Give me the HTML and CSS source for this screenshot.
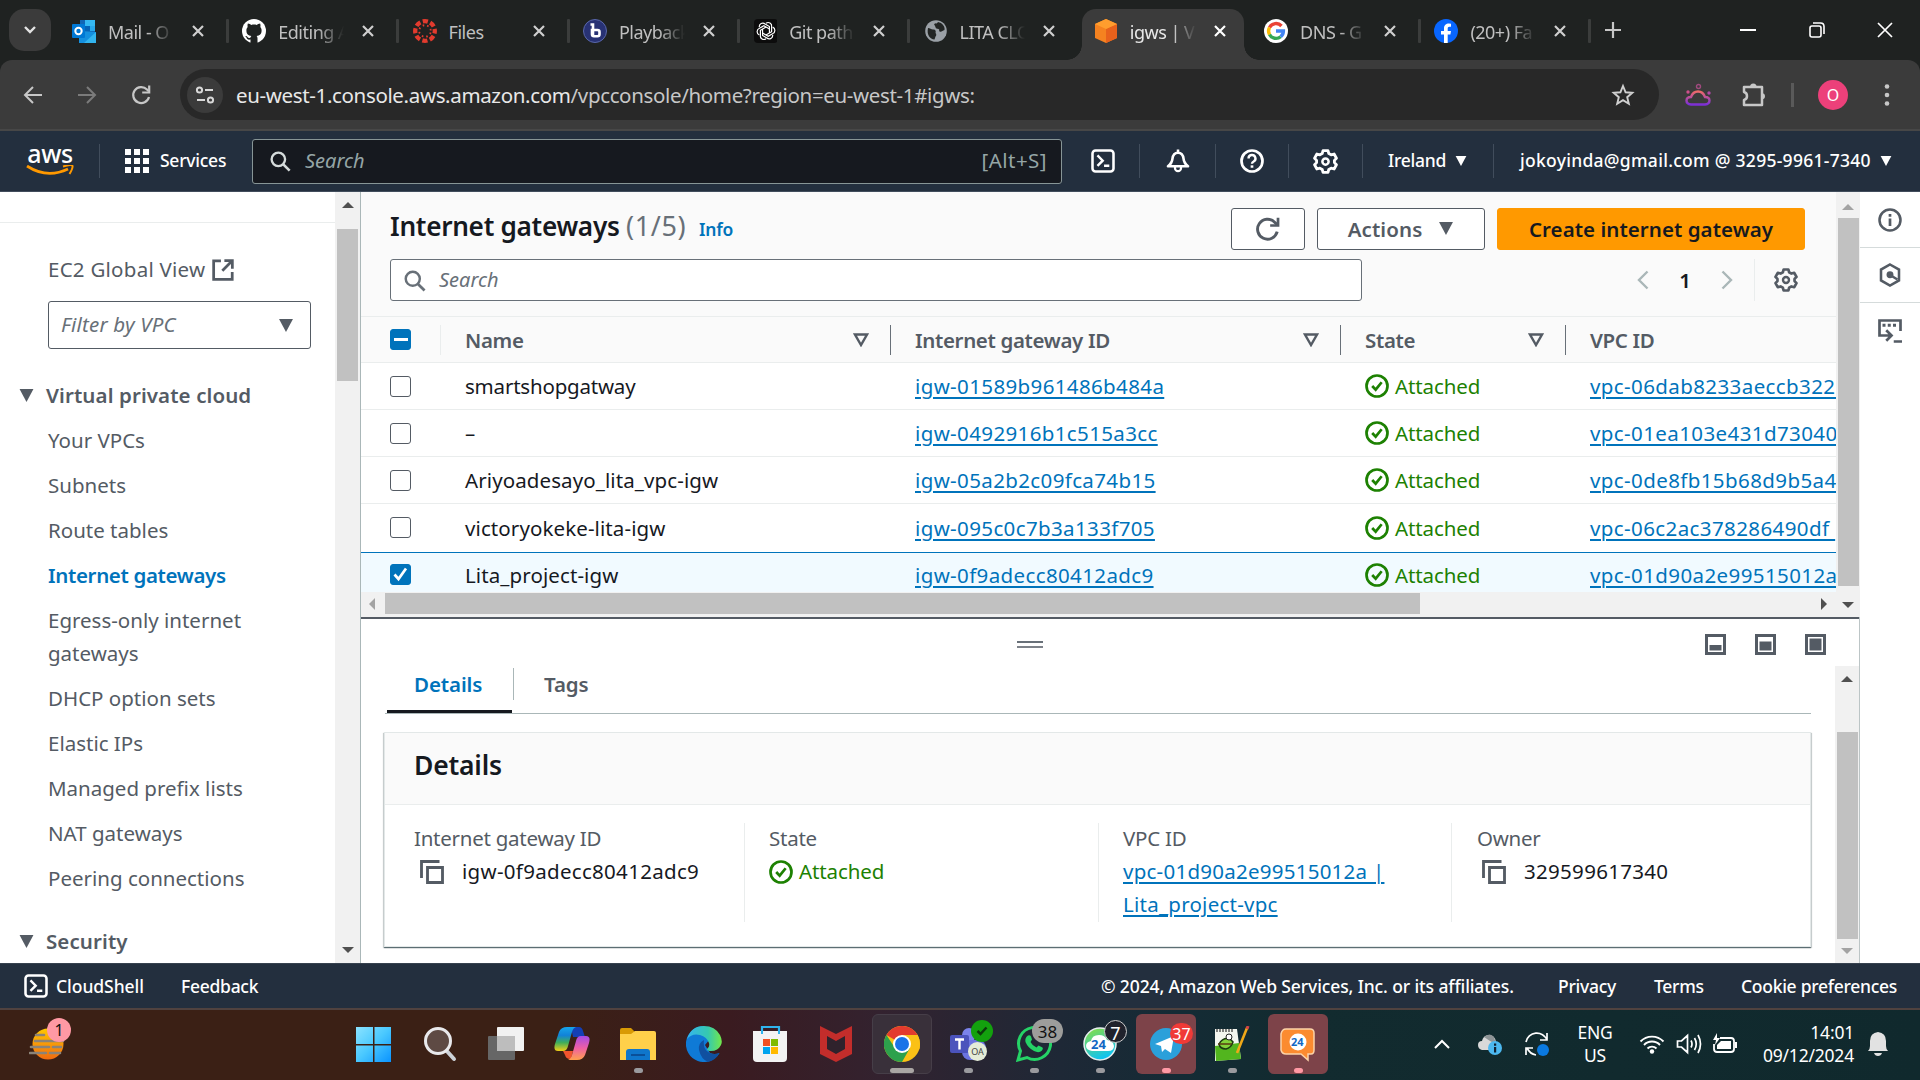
FILE: index.html
```html
<!DOCTYPE html>
<html lang="en">
<head>
<meta charset="utf-8">
<title>igws | VPC Console</title>
<link rel="stylesheet" href="styles.css">
</head>
<body>
<svg class="defs" aria-hidden="true">
  <symbol id="x" viewBox="0 0 24 24"><path d="M7 7l10 10M17 7L7 17" stroke="currentColor" stroke-width="2.2" fill="none"/></symbol>
  <symbol id="search" viewBox="0 0 16 16"><circle cx="6.8" cy="6.8" r="4.9" fill="none" stroke="currentColor" stroke-width="1.7"/><path d="M10.4 10.4L15 15" stroke="currentColor" stroke-width="1.9"/></symbol>
  <symbol id="down" viewBox="0 0 16 14"><path d="M.5 0h15L8 14z" fill="currentColor"/></symbol>
  <symbol id="filter" viewBox="0 0 16 14"><path d="M2 1.5h12L8 12z" fill="none" stroke="currentColor" stroke-width="2.4"/></symbol>
  <symbol id="gear" viewBox="0 0 16 16"><path d="M6.4 1h3.2l.5 1.9 1.5.8 1.9-.5L15 5.900l-1.300 1.400v1.400L15 10.100l-1.500 2.700-1.900-.5-1.500.8L9.600 15H6.400l-.5-1.900-1.500-.8-1.900.5L1 10.100l1.300-1.400V7.300L1 5.900l1.500-2.700 1.900.5 1.500-.8z" fill="none" stroke="currentColor" stroke-width="1.8" stroke-linejoin="round"/><circle cx="8" cy="8" r="2" fill="none" stroke="currentColor" stroke-width="1.600"/></symbol>
  <symbol id="ok" viewBox="0 0 16 16"><circle cx="8" cy="8" r="7" fill="none" stroke="currentColor" stroke-width="1.800"/><path d="M4.800 8l2.300 2.400 4-4.900" fill="none" stroke="currentColor" stroke-width="1.800"/></symbol>
  <symbol id="shell" viewBox="0 0 16 16"><rect x="1" y="1" width="14" height="14" rx="2" fill="none" stroke="currentColor" stroke-width="1.700"/><path d="M4.300 4.300L7.800 7.800l-3.500 3.500M8.700 11.200h3.500" fill="none" stroke="currentColor" stroke-width="1.600"/></symbol>
  <symbol id="copy" viewBox="0 0 16 16"><path d="M1 12V1h12M5 5h10v10H5z" fill="none" stroke="currentColor" stroke-width="1.900"/></symbol>
  <symbol id="refresh" viewBox="0 0 24 24"><path d="M20.500 14.500a9.200 9.200 0 1 1-2.400-8.800L20.500 8" fill="none" stroke="currentColor" stroke-width="2.700"/><path d="M22.500 1.500v8.500H14V7.500h6v-6z" fill="currentColor"/></symbol>
</svg>

<div class="tabstrip">
  <button class="tab-search"><svg width="14" height="10" viewBox="0 0 14 10"><path d="M2 2l5 5 5-5" fill="none" stroke="#e3e3e3" stroke-width="2.400"/></svg></button>
  <div class="tabs">
    <div class="tab"><svg class="fav" viewBox="0 0 24 24"><path d="M8 1h15v12H8z" fill="#1066b5"/><path d="M13 1h10v6H13z" fill="#35b8f1"/><path d="M13 7h5v5h-5z" fill="#0364b8"/><path d="M18 7h5v5h-5z" fill="#28a8ea"/><path d="M7 12l17 1v11H7z" fill="#1490df"/><path d="M24 13L12 24h12z" fill="#50d9ff" opacity=".5"/><rect y="5" width="13" height="14" rx="1" fill="#0078d4"/><circle cx="6.500" cy="12" r="3.200" fill="none" stroke="#fff" stroke-width="2"/></svg><span class="tt">Mail - O</span><svg class="cl"><use href="#x"/></svg></div>
    <div class="tab"><svg class="fav" viewBox="0 0 24 24"><circle cx="12" cy="12" r="12" fill="#fff"/><path d="M8.500 24v-3.500c-2.500.6-3.500-.5-4.200-2.200-.4-.8-1.300-1 -.6-1.300 1.600-.2 2 2 3.400 2.100 .8 0 1.400-.2 1.600-1 .1-.5.400-.9.700-1.200-3-.4-5-1.600-5-5.400 0-1.500.5-2.600 1.300-3.400-.3-.9-.3-2.300.2-3.600 1.400 0 2.600.8 3.400 1.400 1.700-.4 3.700-.4 5.400 0 .8-.6 2-1.400 3.400-1.400.5 1.300.5 2.700.2 3.600.8.800 1.300 1.900 1.300 3.400 0 3.800-2 5-5 5.400.6.500.9 1.300.9 2.400V24z" fill="#1f2221"/></svg><span class="tt">Editing A</span><svg class="cl"><use href="#x"/></svg></div>
    <div class="tab"><svg class="fav" viewBox="0 0 24 24"><circle cx="12" cy="12" r="9.800" fill="none" stroke="#e23b2e" stroke-width="4.300" stroke-dasharray="5.200 2.500" stroke-dashoffset="2.600"/><circle cx="12" cy="12" r="5.800" fill="none" stroke="#e23b2e" stroke-width="1.800" stroke-dasharray="1.600 2.950" stroke-dashoffset="-1.500"/></svg><span class="tt">Files</span><svg class="cl"><use href="#x"/></svg></div>
    <div class="tab"><svg class="fav" viewBox="0 0 24 24"><circle cx="12" cy="12" r="11.500" fill="#283274" stroke="#5a68aa"/><path d="M7.500 5.500h2.500V17M9 11h5.500q2 0 2 2v2.200q0 2-2 2H11q-2 0-2-2z" fill="none" stroke="#fff" stroke-width="2.600"/></svg><span class="tt">Playback</span><svg class="cl"><use href="#x"/></svg></div>
    <div class="tab"><svg class="fav" viewBox="-1 0 24 24"><rect width="24" height="24" rx="4" fill="#0c0c0c"/><g fill="none" stroke="#fff" stroke-width="1.200"><path id="oa" d="M12 4.300a3.500 3.500 0 0 1 5.600 3.400v5L12 16"/><use href="#oa" transform="rotate(60 12 12)"/><use href="#oa" transform="rotate(120 12 12)"/><use href="#oa" transform="rotate(180 12 12)"/><use href="#oa" transform="rotate(240 12 12)"/><use href="#oa" transform="rotate(300 12 12)"/></g></svg><span class="tt">Git path</span><svg class="cl"><use href="#x"/></svg></div>
    <div class="tab"><svg class="fav" viewBox="0 0 24 24"><g transform="translate(2)"><circle cx="11" cy="12" r="10.800" fill="#9aa0a6"/><path d="M3 9c2 0 3 1.500 5 1.500 3 0 3 2 2.500 3.500 1 1 1 2.500 0 3.500l-1 3C5 20 1.500 16 3 9zM9 5c2-1 3 0 4-2l3 1c3 2 4 5 3.500 7-2 .5-3 2.500-5 1.500-1-1 .5-2-1-2.500s-3-.5-3-2z" fill="#222524"/></g></svg><span class="tt">LITA CLO</span><svg class="cl"><use href="#x"/></svg></div>
    <div class="tab active"><svg class="fav" viewBox="0 0 24 24"><path d="M12 0l11 5v14l-11 5L1 19V5z" fill="#f58220"/><path d="M12 10l11-5v14l-11 5z" fill="#e8611c"/><path d="M12 0l11 5-11 5L1 5z" fill="#ff9d2e"/></svg><span class="tt">igws | VP</span><svg class="cl"><use href="#x"/></svg></div>
    <div class="tab"><svg class="fav" viewBox="0 0 24 24"><circle cx="12" cy="12" r="12" fill="#fff"/><g fill="none" stroke-width="3.400"><path d="M17.500 7A7.400 7.400 0 0 0 5.500 8.500" stroke="#ea4335"/><path d="M5.500 8.500a7.400 7.400 0 0 0 0 7" stroke="#fbbc05"/><path d="M5.500 15.500a7.400 7.400 0 0 0 11.200 2.200" stroke="#34a853"/><path d="M16.700 17.700A7.400 7.400 0 0 0 19.400 12H12" stroke="#4285f4"/></g></svg><span class="tt">DNS - G</span><svg class="cl"><use href="#x"/></svg></div>
    <div class="tab"><svg class="fav" viewBox="0 0 24 24"><circle cx="12" cy="12" r="12" fill="#0866ff"/><path d="M10 24v-8.500H7V12h3V9.500C10 6 12 4.500 15 4.500l2 .2v3h-1.500c-1.400 0-1.800.7-1.800 1.800V12H17l-.6 3.500h-2.700V24z" fill="#fff"/></svg><span class="tt">(20+) Fa</span><svg class="cl"><use href="#x"/></svg></div>
  </div>
  <svg class="newtab" width="18" height="18" viewBox="0 0 18 18"><path d="M9 1v16M1 9h16" stroke="#c7c7c7" stroke-width="2.200"/></svg>
  <div class="winctl">
    <svg width="18" height="18" viewBox="0 0 18 18"><path d="M1 9h16" stroke="#fff" stroke-width="2"/></svg>
    <svg width="18" height="18" viewBox="0 0 18 18"><rect x="2" y="5" width="11" height="11" rx="2" fill="none" stroke="#fff" stroke-width="1.600"/><path d="M5 2h7.500Q16 2 16 5.500V13" fill="none" stroke="#fff" stroke-width="1.600"/></svg>
    <svg width="18" height="18" viewBox="0 0 18 18"><path d="M2 2l14 14M16 2L2 16" stroke="#fff" stroke-width="1.700"/></svg>
  </div>
</div>

<div class="toolbar">
  <div class="nav">
    <svg width="20" height="20" viewBox="0 0 20 20"><path d="M19 10H2M10 2l-8 8 8 8" fill="none" stroke="#c7c7c7" stroke-width="2"/></svg>
    <svg width="20" height="20" viewBox="0 0 20 20"><path d="M1 10h17M10 2l8 8-8 8" fill="none" stroke="#7b7b7b" stroke-width="2"/></svg>
    <svg width="22" height="22" viewBox="0 0 22 22"><path d="M19 13a8 8 0 1 1-2-7.500L18.500 7" fill="none" stroke="#c7c7c7" stroke-width="2.200"/><path d="M19.200 1.500v7h-7" fill="none" stroke="#c7c7c7" stroke-width="2.200"/></svg>
  </div>
  <div class="omni">
    <span class="tune"><svg width="20" height="20" viewBox="0 0 20 20"><g fill="none" stroke="#d8d8d8" stroke-width="2"><circle cx="4.500" cy="5" r="2.600"/><path d="M10 5h8M2 15h8"/><circle cx="15.500" cy="15" r="2.600"/></g></svg></span>
    <span class="url">eu-west-1.console.aws.amazon.com<i>/vpcconsole/home?region=eu-west-1#igws:</i></span>
    <svg width="24" height="24" viewBox="0 0 24 24"><path d="M12 3l2.600 6.300 6.700.5-5.100 4.400 1.600 6.600L12 17.200l-5.800 3.600 1.600-6.600-5.100-4.400 6.700-.5z" fill="none" stroke="#d0d0d0" stroke-width="1.900"/></svg>
  </div>
  <div class="ext">
    <svg width="26" height="24" viewBox="0 0 26 24"><defs><linearGradient id="cg" x2="0" y2="1"><stop stop-color="#ee6a6a"/><stop offset="1" stop-color="#7c2fd6"/></linearGradient></defs><path d="M6 21.500q-4.500-.5-4.500-4 .2-3.500 4.500-3.500 2-5.500 7-5.500t7 5.500q4.300 0 4.500 3.500 0 3.500-4.500 4z" fill="none" stroke="url(#cg)" stroke-width="2.400"/><circle cx="13.500" cy="3.500" r="2" fill="none" stroke="#a04a7e" stroke-width="1.400"/><circle cx="3" cy="9" r="1.700" fill="#cf4f8c"/><circle cx="24" cy="10" r="1.700" fill="#b148a8"/></svg>
    <svg class="puzzle" width="26" height="26" viewBox="0 0 26 26"><path d="M3 5h18v18H3v-5c4-1 4-7 0-8z" fill="none" stroke="#c7c7c7" stroke-width="2.500" stroke-linejoin="round"/><path d="M9 5a3.300 3.600 0 0 1 6.600 0zM21 11a3.600 3.300 0 0 1 0 6.500z" fill="#c7c7c7"/></svg>
    <span class="bar"></span>
    <span class="avatar">O</span>
    <svg class="dots" width="6" height="24" viewBox="0 0 6 24"><g fill="#c7c7c7"><circle cx="3" cy="3.500" r="2.300"/><circle cx="3" cy="12" r="2.300"/><circle cx="3" cy="20.500" r="2.300"/></g></svg>
  </div>
</div>

<header class="aws">
  <div class="logo"><span>aws</span><svg width="48" height="11" viewBox="0 0 48 11"><path d="M1 1q20 13 41 3" fill="none" stroke="#f90" stroke-width="2.800"/><path d="M37 1.500q9-2.500 9.500-.5t-3 8" fill="none" stroke="#f90" stroke-width="2"/></svg></div>
  <span class="vsep s1"></span>
  <div class="services"><svg width="24" height="24" viewBox="0 0 24 24" fill="#fff"><path d="M0 0h6v6H0zM9 0h6v6H9zM18 0h6v6h-6zM0 9h6v6H0zM9 9h6v6H9zM18 9h6v6h-6zM0 18h6v6H0zM9 18h6v6H9zM18 18h6v6h-6z"/></svg><span class="t18">Services</span></div>
  <div class="gsearch"><svg width="22" height="22"><use href="#search"/></svg><em>Search</em><span>[Alt+S]</span></div>
  <div class="hicons">
    <span class="hi hs"><svg width="24" height="24"><use href="#shell"/></svg></span>
    <span class="hi hb"><svg width="24" height="24" viewBox="0 0 16 16"><path d="M1.300 11.500Q4 9.500 4.300 6.500 4.800 2.500 8 2.500t3.700 4q.3 3 3 5zM8 .3v2" fill="none" stroke="#fff" stroke-width="1.700" stroke-linejoin="round"/><path d="M6 12v.8a2 2 0 0 0 4 0V12" fill="none" stroke="#fff" stroke-width="1.500"/></svg></span>
    <span class="hi hh"><svg width="24" height="24" viewBox="0 0 16 16"><circle cx="8" cy="8" r="7" fill="none" stroke="#fff" stroke-width="1.800"/><path d="M5.700 6.300a2.300 2.300 0 1 1 3.400 2q-1.100.6-1.100 1.600" fill="none" stroke="#fff" stroke-width="1.600"/><path d="M7.100 10.900h1.800v1.600H7.100z" fill="#fff"/></svg></span>
    <span class="hi hg"><svg width="25" height="25"><use href="#gear"/></svg></span>
  </div>
  <div class="region"><span class="t18 reg">Ireland</span><svg width="12" height="10"><use href="#down"/></svg></div>
  <div class="account"><span class="t18 acc">jokoyinda@gmail.com @ 3295-9961-7340</span><svg width="12" height="10"><use href="#down"/></svg></div>
</header>

<main class="main">
  <aside class="side">
    <div class="sidetop"></div>
    <div class="ec2"><span>EC2 Global View</span><svg width="22" height="22" viewBox="0 0 16 16"><path d="M6.500 1.300H1.200v13.500h13.500V9.500M9 1.200h5.800V7M14.500 1.500L7.500 8.500" fill="none" stroke="#545b64" stroke-width="2"/></svg></div>
    <div class="vpcsel"><em>Filter by VPC</em><svg width="16" height="13"><use href="#down"/></svg></div>
    <div class="sec"><svg width="15" height="13"><use href="#down"/></svg><b>Virtual private cloud</b></div>
    <nav class="links">
      <a>Your VPCs</a><a>Subnets</a><a>Route tables</a><a class="cur">Internet gateways</a><a>Egress-only internet gateways</a><a>DHCP option sets</a><a>Elastic IPs</a><a>Managed prefix lists</a><a>NAT gateways</a><a>Peering connections</a>
    </nav>
    <div class="sec sec2"><svg width="15" height="13"><use href="#down"/></svg><b>Security</b></div>
  </aside>
  <div class="vscroll sb1"><i class="up"></i><i class="thumb"></i><i class="dn"></i></div>

  <section class="content">
    <div class="upper">
      <div class="list">
        <div class="lhead">
          <h1>Internet gateways <span>(1/5)</span></h1><a class="info">Info</a>
          <div class="btns">
            <button class="btn ref"><svg width="26" height="26"><use href="#refresh"/></svg></button>
            <button class="btn act"><span>Actions</span><svg width="16" height="13"><use href="#down"/></svg></button>
            <button class="btn pri"><span>Create internet gateway</span></button>
          </div>
        </div>
        <div class="lfilter">
          <div class="fsearch"><svg width="23" height="23"><use href="#search"/></svg><em>Search</em></div>
          <div class="pager"><svg width="12" height="20" viewBox="0 0 12 20"><path d="M10.500 1.500L2 10l8.500 8.500" fill="none" stroke="#aab7b8" stroke-width="2.400"/></svg><b>1</b><svg width="12" height="20" viewBox="0 0 12 20"><path d="M1.500 1.500L10 10l-8.500 8.500" fill="none" stroke="#aab7b8" stroke-width="2.400"/></svg></div>
          <div class="pref"><svg width="24" height="24"><use href="#gear"/></svg></div>
        </div>
        <div class="row th"><span class="ck"><i class="box some"></i></span><span class="c1">Name<svg width="16" height="14"><use href="#filter"/></svg></span><span class="c2">Internet gateway ID<svg width="16" height="14"><use href="#filter"/></svg></span><span class="c3">State<svg width="16" height="14"><use href="#filter"/></svg></span><span class="c4">VPC ID</span></div>
        <div class="row"><span class="ck"><i class="box"></i></span><span class="c1 tight">smartshopgatway</span><span class="c2"><a>igw-01589b961486b484a</a></span><span class="c3 st"><svg width="24" height="24"><use href="#ok"/></svg>Attached</span><span class="c4"><a>vpc-06dab8233aeccb322&nbsp;</a></span></div>
        <div class="row"><span class="ck"><i class="box"></i></span><span class="c1">–</span><span class="c2"><a>igw-0492916b1c515a3cc</a></span><span class="c3 st"><svg width="24" height="24"><use href="#ok"/></svg>Attached</span><span class="c4"><a>vpc-01ea103e431d73040</a></span></div>
        <div class="row"><span class="ck"><i class="box"></i></span><span class="c1">Ariyoadesayo_lita_vpc-igw</span><span class="c2"><a>igw-05a2b2c09fca74b15</a></span><span class="c3 st"><svg width="24" height="24"><use href="#ok"/></svg>Attached</span><span class="c4"><a>vpc-0de8fb15b68d9b5a4&nbsp;</a></span></div>
        <div class="row r4"><span class="ck"><i class="box"></i></span><span class="c1">victoryokeke-lita-igw</span><span class="c2"><a>igw-095c0c7b3a133f705</a></span><span class="c3 st"><svg width="24" height="24"><use href="#ok"/></svg>Attached</span><span class="c4"><a>vpc-06c2ac378286490df&nbsp;</a></span></div>
        <div class="row sel"><span class="ck"><i class="box on"><svg width="17" height="17" viewBox="0 0 17 17"><path d="M2.500 8.500l4 4.500 7.500-10.500" fill="none" stroke="#fff" stroke-width="2.700"/></svg></i></span><span class="c1">Lita_project-igw</span><span class="c2"><a>igw-0f9adecc80412adc9</a></span><span class="c3 st"><svg width="24" height="24"><use href="#ok"/></svg>Attached</span><span class="c4"><a>vpc-01d90a2e99515012a</a></span></div>
        <div class="hscroll"><i class="lf"></i><i class="hthumb"></i><i class="rt"></i></div>
      </div>
      <div class="vscroll sb2"><i class="up dim"></i><i class="thumb"></i><i class="dn"></i></div>
    </div>
    <div class="split">
      <div class="grip"><span></span><i class="handle"></i><div class="sizes">
        <svg width="21" height="21" viewBox="0 0 21 21"><path d="M1.500 1.500h18v18h-18z" fill="none" stroke="#545b64" stroke-width="3"/><path d="M4.500 11h12v5.500h-12z" fill="#545b64"/></svg>
        <svg width="21" height="21" viewBox="0 0 21 21"><path d="M1.500 1.500h18v18h-18z" fill="none" stroke="#545b64" stroke-width="3"/><path d="M4.500 7.500h12v9h-12z" fill="#545b64"/></svg>
        <svg width="21" height="21" viewBox="0 0 21 21"><path d="M1.500 1.500h18v18h-18z" fill="none" stroke="#545b64" stroke-width="3"/><path d="M4.500 4.500h12v12h-12z" fill="#545b64"/></svg>
      </div></div>
      <div class="sbody">
        <div class="sinner">
          <div class="stabs"><b class="on">Details</b><b>Tags</b></div>
          <div class="card">
            <h2>Details</h2>
            <div class="cols">
              <div><label>Internet gateway ID</label><p class="cp"><svg width="24" height="24"><use href="#copy"/></svg>igw-0f9adecc80412adc9</p></div>
              <div><label>State</label><p class="st"><svg width="24" height="24"><use href="#ok"/></svg>Attached</p></div>
              <div><label>VPC ID</label><p><a>vpc-01d90a2e99515012a | <br>Lita_project-vpc</a></p></div>
              <div><label>Owner</label><p class="cp"><svg width="24" height="24"><use href="#copy"/></svg>329599617340</p></div>
            </div>
          </div>
        </div>
        <div class="vscroll sb3"><i class="up"></i><i class="thumb"></i><i class="dn dim"></i></div>
      </div>
    </div>
  </section>
  <aside class="rail">
    <div><svg width="24" height="24" viewBox="0 0 16 16"><circle cx="8" cy="8" r="7" fill="none" stroke="#545b64" stroke-width="1.700"/><path d="M7.100 7h1.800v5H7.100zM7.100 4h1.800v1.800H7.100z" fill="#545b64"/></svg></div>
    <div><svg width="24" height="24" viewBox="0 0 16 16"><path d="M8 1l6 3.400v7.200L8 15l-6-3.400V4.400z" fill="none" stroke="#545b64" stroke-width="1.700"/><circle cx="8" cy="7.800" r="2.300" fill="#545b64"/><path d="M8 8l5 3" stroke="#545b64" stroke-width="1.700"/></svg></div>
    <div><svg width="24" height="24" viewBox="0 0 16 16"><path d="M15 8V1H1v10h7M5.500 7.500L9 11l-3.500 3.500M10.500 15H16" fill="none" stroke="#545b64" stroke-width="1.800"/><path d="M3 3.200h2v2H3zM6.500 3.200h2v2h-2zM10 3.200h2v2h-2z" fill="#545b64"/></svg></div>
  </aside>
</main>

<footer class="foot">
  <svg width="24" height="24"><use href="#shell"/></svg><span class="f1">CloudShell</span><span class="f2">Feedback</span>
  <span class="f3">© 2024, Amazon Web Services, Inc. or its affiliates.</span><span class="f4">Privacy</span><span class="f5">Terms</span><span class="f6">Cookie preferences</span>
</footer>

<div class="taskbar">
  <div class="weather"><svg width="38" height="34" viewBox="0 0 38 34"><defs><linearGradient id="sg" x2="0" y2="1"><stop stop-color="#ffc800"/><stop offset="1" stop-color="#f06a10"/></linearGradient></defs><circle cx="19" cy="17" r="15.500" fill="url(#sg)"/><path d="M7 8h8M6 14h28M2 20h18M24 20h8M1 26h16M21 26h10" stroke="#8b8378" stroke-width="2.600" stroke-linecap="round"/></svg><i>1</i></div>
  <div class="apps">
    <div><svg viewBox="0 0 36 36"><defs><linearGradient id="wg" x2="1" y2="1"><stop stop-color="#8be3ff"/><stop offset=".5" stop-color="#49c8ff"/><stop offset="1" stop-color="#0a93ff"/></linearGradient></defs><path d="M0 1h17v17H0zM18.500 1H35v17H18.500zM0 19.500h17V36H0zM18.500 19.500H35V36H18.500z" fill="url(#wg)"/></svg></div>
    <div><svg viewBox="0 0 36 36"><path d="M23 23l9 10" stroke="#cdd2d8" stroke-width="4" stroke-linecap="round"/><circle cx="16" cy="15" r="12.500" fill="#5e4a44" stroke="#e9e9ec" stroke-width="3"/></svg></div>
    <div><svg viewBox="0 0 36 36"><rect y="10" width="27" height="24" rx="1" fill="#666"/><rect x="9" y="1" width="27" height="24" rx="1" fill="#f1f1f1"/><path d="M9 10h18v15H9z" fill="#bdbdbd"/></svg></div>
    <div><svg viewBox="0 0 36 36"><defs><linearGradient id="c1" x2="0" y2="1"><stop stop-color="#16a5ec"/><stop offset=".35" stop-color="#1182d8"/><stop offset=".65" stop-color="#3fae5a"/><stop offset="1" stop-color="#f3cf17"/></linearGradient><linearGradient id="c2" x2="0" y2="1"><stop stop-color="#a54be6"/><stop offset=".5" stop-color="#ee5fa5"/><stop offset="1" stop-color="#ffa04d"/></linearGradient></defs><path d="M17 1h8q3 0 4 4l2 6H19z" fill="#143fb5"/><path d="M9 25h10l-2 8h-1q-4 0-5-4z" fill="#f2542d"/><path d="M13 1h9q-3 1-4 5l-4 14q-1 5-5 5H4q-5 0-3-7l4-12q2-5 8-5z" fill="url(#c1)"/><path d="M23 34h-9q3-1 4-5l4-14q1-5 5-5h5q5 0 3 7l-4 12q-2 5-8 5z" fill="url(#c2)"/></svg></div>
    <div class="run"><svg viewBox="0 0 36 36"><path d="M0 4q0-2 2-2h9l4 4v6H0z" fill="#d99a05"/><path d="M0 8h11l4-3h19q2 0 2 2v27H0z" fill="#ffd04a"/><path d="M6 34V26q0-3 3-3h18q3 0 3 3v8z" fill="#0f76cb"/><path d="M11 29h14" stroke="#0a4f98" stroke-width="2"/></svg></div>
    <div><svg viewBox="0 0 36 36"><defs><linearGradient id="e1"><stop stop-color="#35b5ee"/><stop offset=".6" stop-color="#35c8b0"/><stop offset="1" stop-color="#72e84a"/></linearGradient></defs><path d="M18 0a18 18 0 1 0 15.500 27q-5 2-9.500 0l-5-8 5-6z" fill="#0f7ad6"/><path d="M1 13Q5 0 18 0q11 0 16 9 3 6 1 10-3 6-10 6-4 0-4-2 3-2 2-6-2-6-9-8Q6 7 1 13z" fill="url(#e1)"/><path d="M18 14q-6 3-5 10 2 9 9 12 8-2 11.500-9-5 2-9.500 0-5-2-6-7-.5-3 0-6z" fill="#1050a0"/></svg></div>
    <div><svg viewBox="0 0 36 36"><path d="M10 8V1h17v7" fill="none" stroke="#2fb4ee" stroke-width="2.200"/><path d="M1 5h34v27q0 4-4 4H5q-4 0-4-4z" fill="#f3f3f3"/><path d="M10 5v3M27 5v3" stroke="#2fb4ee" stroke-width="2"/><path d="M11 13h7v7h-7z" fill="#f25022"/><path d="M19 13h7v7h-7z" fill="#7fba00"/><path d="M11 21h7v7h-7z" fill="#00a4ef"/><path d="M19 21h7v7h-7z" fill="#ffb900"/></svg></div>
    <div><svg viewBox="0 0 36 36"><path d="M2 0l16 8 16-8v28L18 36 2 28z" fill="#c32d2b"/><path d="M9 10l9 5 9-5v13l-9 5-9-5z" fill="#2f222c"/></svg></div>
    <div class="chrome"><svg viewBox="0 0 36 36"><circle cx="18" cy="18" r="18" fill="#fbc116"/><path d="M18 18L2.400 9A18 18 0 0 1 33.600 9z" fill="#e33b2e"/><path d="M2.400 9A18 18 0 0 0 18 36l8-14H11z" fill="#2da14c"/><path d="M18 9h15.600q2.400 5 2.400 9t-1 6l-9-2z" fill="#fbc116"/><circle cx="18" cy="18" r="9" fill="#fff"/><circle cx="18" cy="18" r="7" fill="#1a73e8"/></svg></div>
    <div class="run"><svg viewBox="0 0 36 36"><circle cx="19" cy="9" r="7" fill="#7b83eb"/><rect x="12" y="14" width="24" height="20" rx="8" fill="#6b74e0"/><rect y="9" width="19" height="18" rx="2" fill="#4b53bc"/><path d="M5 13.500h9M9.500 13.500v10" stroke="#fff" stroke-width="2.400"/></svg><i class="bd oa">OA</i><i class="bd tick"><svg width="12" height="10" viewBox="0 0 12 10"><path d="M1.500 5l3 3 6-6.500" fill="none" stroke="#0c3b0c" stroke-width="2.500"/></svg></i></div>
    <div class="run"><svg viewBox="0 0 36 36"><path d="M2 34l2.500-9A16 16 0 1 1 11 31.500z" fill="none" stroke="#25d366" stroke-width="3"/><path d="M12 9.500q2-1 3 1l1 3-1.500 2.500q2 4 6 5.500l2-2 4 2q1 1-.5 3-3 3-8 .5-6-3-8.500-9-1-4 2.500-6.500z" fill="#25d366"/></svg><i class="bd n38">38</i></div>
    <div class="run"><svg viewBox="0 0 36 36"><defs><linearGradient id="b1" x2=".4" y2="1"><stop stop-color="#8de03b"/><stop offset="1" stop-color="#12c4ee"/></linearGradient></defs><circle cx="18" cy="18" r="16" fill="url(#b1)" stroke="#e7eeee" stroke-width="1.500"/><path d="M10 25q-6-1-6-5t5-5q1-6 8-6 6 0 8 5 6 0 7 6 0 5-6 5z" fill="#fff"/></svg><i class="n24">24</i><i class="bd n7">7</i></div>
    <div class="run hot"><svg viewBox="0 0 36 36"><circle cx="18" cy="18" r="16" fill="#2ba0da"/><path d="M7 18l19-8-3 17-6-4-3 3-1-6z" fill="#fff"/></svg><i class="bd n37">37</i></div>
    <div class="run"><svg viewBox="0 0 36 36"><path d="M1 3h22l4 30-26 2z" fill="#f4f6ef"/><path d="M1 20l24-3 2 16-25 2z" fill="#52b51e"/><path d="M3 3v3M6 3v3M9 3v3M12 3v3M15 3v3M18 3v3" stroke="#333" stroke-width="1.200"/><path d="M5 18q4-7 11-5l3 3q-2 6-7 7-6 0-7-5z" fill="#83d33a" stroke="#1c3a10" stroke-width="1.500"/><path d="M4 18h14" stroke="#5a3a10" stroke-width="1.500"/><circle cx="15" cy="11" r="3" fill="#fff" stroke="#222"/><path d="M33 2L23 27" stroke="#f0a818" stroke-width="2.600"/><path d="M34 0l-1 3" stroke="#d34545" stroke-width="3"/></svg></div>
    <div class="run hot"><svg viewBox="0 0 36 36"><path d="M6 3h24q4 0 4 4v17q0 4-3 4h-3v6l-7-6H6q-4 0-5-4V8q1-5 5-5z" fill="#fb8b30" stroke="#fbd3a8" stroke-width="1.500"/><circle cx="18" cy="16" r="8.500" fill="#fff"/></svg><i class="n24 o24">24</i></div>
  </div>
  <div class="tray">
    <svg width="18" height="12" viewBox="0 0 18 12"><path d="M2 10l7-7 7 7" fill="none" stroke="#fff" stroke-width="2"/></svg>
    <svg class="t2" width="26" height="26" viewBox="0 0 26 26"><path d="M5 19q-4-1-4-5t4-4q1-5 6-6 7 0 8 7l-6 8z" fill="#d9d9d9"/><path d="M7 6q6-5 10 0l2 7-6-3z" fill="#8e9496"/><circle cx="18" cy="17" r="7" fill="#4cb8f0"/><path d="M17 16h2.200v5.500H17zM17 12.500h2.200v2.200H17z" fill="#123"/></svg>
    <svg class="t3" width="26" height="26" viewBox="0 0 26 26"><g fill="none" stroke="#fff" stroke-width="1.700"><path d="M2 11a11 11 0 0 1 21-2M23 2v7h-7M2 24v-7h7M3 17q3 6 9 7"/></g><circle cx="19" cy="19" r="6" fill="#0a79e0"/></svg>
    <div class="lang">ENG<br>US</div>
    <svg class="t4" width="26" height="20" viewBox="0 0 26 20"><g fill="none" stroke="#fff" stroke-width="1.900"><path d="M1.500 7.500a16 16 0 0 1 23 0M5 11a11 11 0 0 1 16 0M8.500 14.500a6.300 6.300 0 0 1 9 0"/></g><circle cx="13" cy="17.500" r="2.200" fill="#fff"/></svg>
    <svg class="t5" width="26" height="22" viewBox="0 0 26 22"><g fill="none" stroke="#fff" stroke-width="1.700"><path d="M1.500 8v6h4l6 5.500v-17L5.500 8zM15 7.500q2 3.500 0 7M18.500 5q3.500 6 0 12M22 2q5 9 0 18"/></g></svg>
    <svg class="t6" width="26" height="22" viewBox="0 0 26 22"><path d="M8 5h11q3 0 3 3v8q0 3-3 3H5q-3 0-3-3v-5" fill="none" stroke="#fff" stroke-width="1.800"/><path d="M9 8h10v8H5v-4zM23 9h2v6h-2zM5 0L1 7h3l-1 5 5-7H5z" fill="#fff"/></svg>
    <div class="clock">14:01<br>09/12/2024</div>
    <svg class="t7" width="20" height="24" viewBox="0 0 20 24"><path d="M0 19q2-2 2-5V9q0-8 8-9 8 1 8 9v5q0 3 2 5zM6 21h8q-1 3-4 3t-4-3z" fill="#e2e2e2"/></svg>
  </div>
</div>
</body>
</html>
```
FILE: styles.css
```css
* { box-sizing: border-box; }
html, body { margin: 0; height: 1080px; overflow: hidden; }
body { width: 1920px; display: flex; flex-direction: column; font-family: "Noto Sans", "Open Sans", sans-serif; font-size: 20.500px; color: #16191f; background: #1f2221; }
.defs { display: none; }
svg { flex: none; display: block; }
i { font-style: normal; }
span, b, em, a, label, p { white-space: nowrap; }
button { font: inherit; border: 0; padding: 0; margin: 0; }

/* Browser tab strip */
.tabstrip { height: 60px; flex: none; background: #1f2221; display: flex; align-items: center; padding-left: 9px; position: relative; }
.tab-search { width: 42px; height: 42px; border-radius: 15px; background: #3b3b3b; display: grid; place-items: center; margin-right: 9px; }
.tabs { display: flex; align-self: stretch; }
.tab { width: 170.300px; display: flex; align-items: center; padding: 2px 0 0 12px; position: relative; color: #c0c0c0; font-size: 18px; }
.tab::after { content: ""; width: 3px; height: 24px; margin-left: 16px; background: #3b3d3c; border-radius: 1px; }
.fav { width: 24px; height: 24px; }
.tt { width: 66px; margin-left: 12px; overflow: hidden; letter-spacing: -.5px; padding-top: 2px; -webkit-mask-image: linear-gradient(90deg, #000 60%, transparent 100%); mask-image: linear-gradient(90deg, #000 60%, transparent 100%); }
.cl { width: 24px; height: 24px; margin-left: 12px; color: #cfcfcf; }
.tab:nth-child(3) .tt { -webkit-mask-image: none; mask-image: none; }
.tab.active { color: #e8e8e8; }
.tab.active::before { content: ""; position: absolute; z-index: 0; left: 0; top: 9px; width: 162px; height: 51px; background: #3b3b3b; border-radius: 14px 14px 0 0; }
.tab.active > * { position: relative; z-index: 1; }
.tab.active .cl { color: #fff; }
.tab.active::after { position: absolute; left: -15px; bottom: 0; width: 192px; height: 15px; margin: 0; background: radial-gradient(circle at 0 0, transparent 14.500px, #3b3b3b 15px) left / 15px 15px no-repeat, radial-gradient(circle at 100% 0, transparent 14.500px, #3b3b3b 15px) right / 15px 15px no-repeat; }
.tab:nth-child(6)::after { visibility: hidden; }
.newtab { margin-left: 11px; }
.winctl { margin-left: auto; display: flex; gap: 50.500px; padding-right: 26px; }

/* Address bar */
.toolbar { height: 71px; flex: none; background: #3b3b3b; border-bottom: 2px solid #474747; display: flex; align-items: center; border-radius: 12px 12px 0 0; }
.nav { display: flex; align-items: center; width: 180px; padding-left: 23px; gap: 33.500px; }
.omni { width: 1479px; height: 51px; border-radius: 26px; background: #282828; display: flex; align-items: center; padding: 0 24px 0 7px; }
.tune { width: 36px; height: 36px; border-radius: 50%; background: #3b3b3b; display: grid; place-items: center; }
.url { margin-left: 13px; margin-right: auto; color: #e8e8e8; font-size: 20.500px; letter-spacing: -.35px; }
.url i { color: #c7c7c7; }
.ext { display: flex; align-items: center; padding-left: 26px; }
.puzzle { margin-left: 30px; }
.bar { width: 3px; height: 24px; background: #5a5a5a; margin-left: 24px; }
.avatar { width: 30px; height: 30px; border-radius: 50%; background: #ec407a; color: #fff; display: grid; place-items: center; font-size: 16px; margin-left: 24px; }
.dots { margin-left: 36px; }

/* Console header */
.aws { height: 61px; flex: none; background: #232f3e; border-bottom: 1px solid #414d5c; color: #fff; display: flex; align-items: center; padding-left: 26px; }
.logo { width: 48px; height: 34px; display: flex; flex-direction: column; align-items: center; margin-top: -2px; }
.logo span { font: 500 25px/21px "Noto Sans", sans-serif; letter-spacing: -.4px; height: 22px; }
.vsep { width: 1px; height: 34px; background: #414d5c; }
.s1 { margin: 0 25px; }
.services { display: flex; align-items: center; gap: 11px; width: 127px; }
.t18 { font-size: 17.500px; font-weight: 500; letter-spacing: -.25px; margin-top: -2px; }
.gsearch { width: 810px; height: 45px; background: #16191f; border: 1px solid #879596; border-radius: 3px; display: flex; align-items: center; padding: 0 14px 0 16px; color: #d5dbdb; }
.gsearch em { margin: -2px auto 0 14px; color: #95a5a6; font-size: 20px; letter-spacing: 0; }
.gsearch span { color: #95a5a6; letter-spacing: .45px; margin-top: -2px; }
.hicons { display: flex; }
.hi { height: 34px; display: flex; align-items: center; justify-content: center; border-right: 1px solid #414d5c; }
.hs { width: 78px; padding-left: 5px; }
.hb { width: 76px; }
.hh { width: 73px; }
.hg { width: 74px; }
.region { width: 131px; height: 34px; display: flex; align-items: center; padding-left: 25px; gap: 9px; border-right: 1px solid #414d5c; }
.account { display: flex; align-items: center; padding-left: 26px; gap: 9px; }
.acc { letter-spacing: .28px; }

/* Console body */
.main { height: 771px; flex: none; display: flex; background: #fff; }
.side { width: 335px; overflow: hidden; color: #545b64; }
.sidetop { height: 31px; border-bottom: 1px solid #eaeded; }
.ec2 { display: flex; align-items: center; gap: 7px; height: 33px; margin: 30px 0 0 48px; }
.ec2 span { letter-spacing: .25px; margin-top: -2px; }
.vpcsel { margin: 15px 0 0 48px; width: 263px; height: 48px; border: 1px solid #545b64; border-radius: 3px; display: flex; align-items: center; justify-content: space-between; padding: 0 16px 0 12px; color: #545b64; }
.vpcsel em { color: #687078; font-size: 20.500px; letter-spacing: .2px; margin-top: -2px; }
.sec { margin: 29px 0 0 19px; height: 33px; display: flex; align-items: center; gap: 12px; }
.sec svg { margin-top: 2px; }
.sec b { letter-spacing: .1px; font-weight: 600; }
.links { display: flex; flex-direction: column; gap: 12px; margin: 13px 0 0 48px; width: 240px; }
.links a { line-height: 33px; white-space: normal; }
.links .cur { color: #0073bb; font-weight: 600; letter-spacing: -.35px; }
.sec2 { margin-top: 29px; }

.vscroll { background: #f1f1f1; display: flex; flex-direction: column; align-items: center; flex: none; }
.up, .dn { width: 0; height: 0; border: 6px solid transparent; flex: none; }
.up { border-top: 0; border-bottom: 6px solid #505050; margin-top: 1px; }
.dn { border-bottom: 0; border-top: 6px solid #505050; margin: auto 0 1px; }
.up.dim { border-bottom-color: #a3a3a3; }
.dn.dim { border-top-color: #a3a3a3; }
.thumb { width: 21px; background: #c1c1c1; }
.sb1 { width: 25px; padding: 9px 0 9px; }
.sb1 .thumb { height: 152px; margin-top: 21px; }

.content { width: 1500px; border-left: 1px solid #aab7b8; border-right: 1px solid #bcc5c6; display: flex; flex-direction: column; }
.upper { height: 427px; display: flex; border-bottom: 2px solid #545b64; }
.list { width: 1475px; overflow: hidden; background: #fafafa; flex: none; display: flex; flex-direction: column; }
.lhead { height: 67px; display: flex; padding: 16px 31px 0 29px; flex: none; }
h1 { margin: 0; font-size: 26.200px; line-height: 36px; font-weight: 600; letter-spacing: -.3px; width: 297px; white-space: nowrap; }
h1 span { color: #687078; font-weight: 400; font-size: 27px; letter-spacing: .6px; }
.info { margin-left: 12px; line-height: 42px; font-size: 17.500px; font-weight: 600; color: #0073bb; letter-spacing: -.2px; }
.btns { margin-left: auto; display: flex; gap: 12px; }
.btn { height: 42px; background: #fff; border: 1px solid #545b64; border-radius: 3px; color: #545b64; display: flex; align-items: center; justify-content: center; font-weight: 600; padding-bottom: 1px; }
.ref { width: 74px; }
.act { width: 168px; gap: 16px; letter-spacing: .1px; }
.pri { width: 308px; background: #f90; border-color: #f90; color: #16191f; letter-spacing: .05px; }
.lfilter { height: 57px; display: flex; padding-left: 29px; flex: none; }
.fsearch { width: 972px; height: 42px; border: 1px solid #687078; border-radius: 3px; background: #fff; display: flex; align-items: center; padding-left: 12px; gap: 13px; color: #687078; }
.fsearch em { font-size: 20px; margin-top: -2px; }
.pager { margin-left: 275px; height: 42px; display: flex; align-items: center; justify-content: space-between; padding: 0 21px 0 0; width: 118px; border-right: 1px solid #eaeded; }
.pager b { font-weight: 600; }
.pref { height: 42px; display: flex; align-items: center; margin-left: 19px; color: #545b64; }
.row { height: 47px; flex: none; width: 1600px; display: grid; grid-template-columns: 104px 450px 450px 225px 1fr; align-items: center; background: #fff; border-bottom: 1px solid #eaeded; line-height: 30px; }
.row.th { height: 47px; background: #fafafa; border-top: 1px solid #eaeded; color: #545b64; font-weight: 600; letter-spacing: -.35px; }
.row.r4 { height: 48px; border: 0; padding-bottom: 1px; }
.row.sel { height: 40px; background: #f1faff; border: 0; border-top: 1px solid #0073bb; border-left: 1px solid #0073bb; margin-left: -1px; padding-top: 7px; align-items: start; }
.sel .ck { padding-top: 4px; }
.row:not(.th) .c1 { letter-spacing: .1px; }
.row .c1.tight { letter-spacing: -.2px; }
.row:not(.th) .c2 { letter-spacing: .37px; }
.row:not(.th) .c4 { letter-spacing: .4px; }
.row a, .card a { color: #0073bb; text-decoration: underline; text-decoration-thickness: 2px; text-underline-offset: 3px; }
.ck { padding-left: 29px; }
.box { display: grid; place-items: center; width: 21px; height: 21px; border: 1px solid #545b64; border-radius: 3px; background: #fff; }
.box.on, .box.some { background: #0073bb; border-color: #0073bb; }
.box.some::before { content: ""; width: 14px; height: 3px; background: #fff; }
.th .ck { height: 30px; padding-top: 4px; border-right: 1px solid #eaeded; width: 80px; }
.th .c1, .th .c2, .th .c3 { display: flex; justify-content: space-between; align-items: center; border-right: 1px solid #687078; margin-right: 24px; padding-right: 21px; color: #545b64; }
.st { display: flex; align-items: center; gap: 6px; color: #1d8102; letter-spacing: -.1px; }
.hscroll { height: 25px; flex: none; background: #f1f1f1; display: flex; align-items: center; padding: 0 9px 2px 8px; }
.lf, .rt { width: 0; height: 0; border: 6px solid transparent; }
.lf { border-left: 0; border-right-color: #a3a3a3; }
.rt { border-right: 0; border-left-color: #505050; margin-left: auto; }
.hthumb { width: 1035px; height: 21px; background: #c1c1c1; margin-left: 10px; }
.sb2 { width: 24px; padding: 11px 0 8px; }
.sb2 .thumb { height: 368px; margin-top: 8px; }

.split { height: 344px; display: flex; flex-direction: column; }
.grip { height: 47px; display: grid; grid-template-columns: 656px 26px 1fr; align-items: center; padding: 4px 33px 0 0; }
.grip .handle { width: 26px; height: 7px; border-top: 2px solid #687078; border-bottom: 2px solid #7d8289; margin-top: -1px; }
.sizes { display: flex; gap: 29px; justify-content: flex-end; }
.sbody { display: flex; flex: 1; }
.sinner { flex: 1; padding: 0 24px 0 23px; }
.sb3 { width: 24px; padding: 9px 0 8px; }
.sb3 .thumb { height: 207px; margin-top: 50px; }
.stabs { height: 48px; margin-left: 1px; border-bottom: 1px solid #aab7b8; display: flex; }
.stabs b { height: 32px; margin-top: 2px; line-height: 32px; font-weight: 600; color: #545b64; padding-left: 30px; letter-spacing: -.1px; }
.stabs .on { width: 129px; border-right: 1px solid #aab7b8; color: #0073bb; padding-left: 29px; position: relative; }
.stabs .on::after { content: ""; position: absolute; left: 2px; width: 125px; top: 42px; height: 3px; background: #16191f; }
.card { margin-top: 18px; height: 215px; border: 1px solid #e3e8e8; box-shadow: 0 1px 1px 0 rgba(0, 28, 36, .5), 1px 1px 1px 0 rgba(0, 28, 36, .15), -1px 1px 1px 0 rgba(0, 28, 36, .15); background: #fff; }
h2 { margin: 0; height: 72px; background: #fafafa; border-bottom: 1px solid #eaeded; font-size: 26.500px; line-height: 65px; padding-left: 29px; font-weight: 600; letter-spacing: -.2px; }
.cols { display: grid; grid-template-columns: 360px 354px 353px 1fr; padding-top: 18px; }
.cols > div { height: 99px; border-right: 1px solid #eaeded; padding-left: 24px; line-height: 33px; }
.cols > div:first-child { padding-left: 29px; }
.cols > div:last-child { border: 0; padding-left: 25px; }
.cols label { display: block; color: #545b64; margin-top: -1px; letter-spacing: -.25px; }
.cols p { margin: 0; letter-spacing: .3px; }
.cols p.st { letter-spacing: -.1px; }
.cols a { letter-spacing: .25px; }
.cp { display: flex; align-items: center; gap: 18px; padding-left: 6px; }
.cols > div:last-child .cp { padding-left: 5px; }
.cp svg { color: #545b64; }
.rail { flex: 1; padding-top: 1px; }
.rail div { height: 55px; border-bottom: 1px solid #d5dbdb; display: grid; place-items: center; }
.rail div:last-child { border: 0; }

/* Console footer */
.foot { height: 45px; flex: none; background: #232f3e; color: #fff; display: flex; align-items: center; font-size: 17.500px; font-weight: 500; letter-spacing: -.28px; padding: 0 0 1px 24px; border-top: 1px solid #37424f; }
.f1 { margin-left: 8px; width: 125px; letter-spacing: -.05px; }
.f3 { margin-left: auto; width: 457px; letter-spacing: -.12px; }
.f4 { width: 96px; }
.f5 { width: 87px; }
.f6 { width: 179px; }

/* Windows taskbar */
.taskbar { height: 72px; flex: none; border-top: 2px solid #50423f; display: flex; color: #fff; background: linear-gradient(90deg, #3b2015 0, #3b2015 560px, #3a1b20 730px, #33222f 880px, #1e2836 1060px, #142b35 1180px, #122b2f 1300px, #10292d 100%); }
.weather { width: 344px; padding: 17px 0 0 29px; position: relative; }
.weather i { position: absolute; left: 47px; top: 8px; width: 24px; height: 24px; border-radius: 50%; background: #ff99a4; color: #111; font-size: 16px; line-height: 24px; text-align: center; }
.apps { display: flex; gap: 6px; padding-top: 4px; }
.apps > div { width: 60px; height: 60px; border-radius: 6px; position: relative; padding: 12px; }
.apps > div > svg { width: 36px; height: 36px; }
.run::after, .chrome::after { content: ""; position: absolute; left: 26px; bottom: 1px; width: 9px; height: 5px; border-radius: 3px; background: #9a9a9e; }
.chrome { background: #39303a; border: 1px solid #463e48; }
.apps > .chrome { padding: 11px; }
.chrome::after { left: 17px; width: 24px; bottom: 0; background: #aaa6a4; }
.hot { background: #7d4349; }
.run.hot::after { background: #ff99a4; }
.bd { position: absolute; border-radius: 12px; text-align: center; display: grid; place-items: center; }
.tick { left: 33px; top: 6px; width: 22px; height: 22px; background: #13a10e; }
.oa { left: 30px; top: 28px; width: 19px; height: 19px; background: #e4ecd8; color: #444; font-size: 9px; }
.n38 { left: 28px; top: 5px; width: 31px; height: 24px; background: #9d9d9b; color: #111; font-size: 17px; }
.n7 { left: 34px; top: 6px; width: 23px; height: 23px; background: #20222c; border: 1px solid #ccc; font-size: 18px; }
.n37 { left: 34px; top: 9px; width: 23px; height: 21px; background: #f03a37; font-size: 16px; }
.n24 { position: absolute; left: 21px; top: 21px; font: 700 13px/18px "Open Sans", sans-serif; color: #1268c4; }
.o24 { left: 23px; top: 19px; font-size: 11px; }
.tray { display: flex; align-items: center; padding-left: 105px; padding-bottom: 2px; font-size: 17.500px; line-height: 23px; letter-spacing: -.2px; }
.t2 { margin-left: 26px; }
.t3 { margin-left: 21px; }
.lang { width: 42px; margin-left: 24px; text-align: center; }
.t4 { margin-left: 23px; }
.t5 { margin-left: 11px; }
.t6 { margin-left: 10px; }
.clock { width: 96px; margin-left: 20px; text-align: right; white-space: nowrap; }
.t7 { margin-left: 14px; }
```
